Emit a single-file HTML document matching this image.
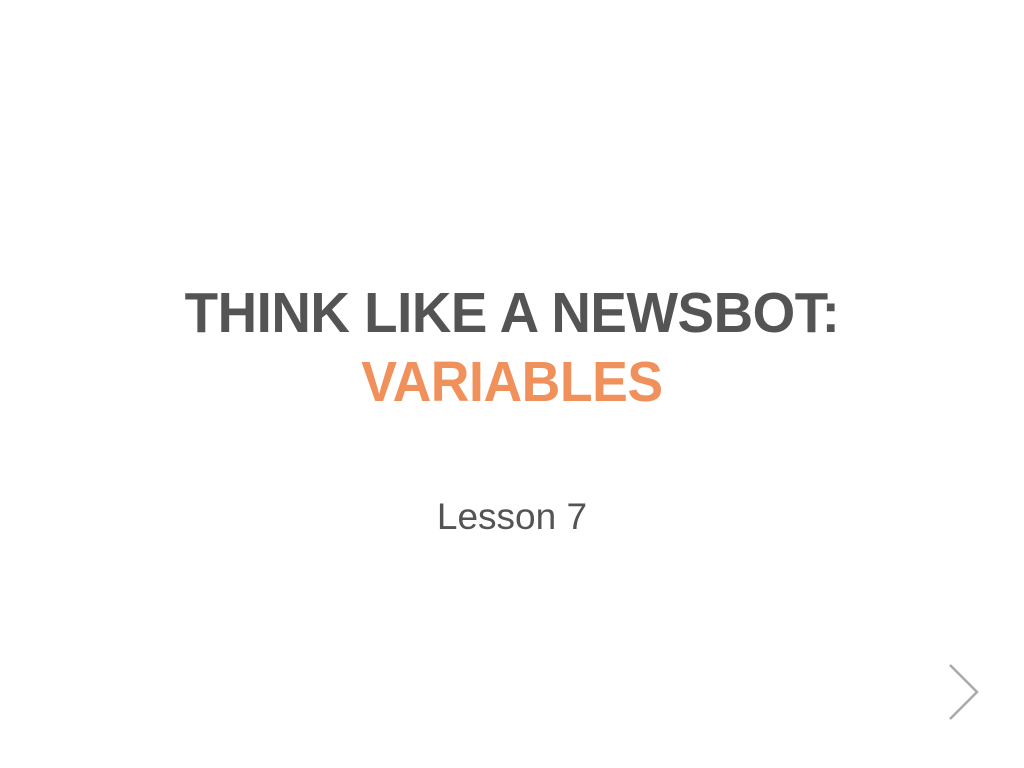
<!DOCTYPE html>
<html><head><style>
body{margin:0;width:1024px;height:768px;background:#fff;position:relative;overflow:hidden;font-family:"Liberation Sans",Arial,sans-serif}
.t{position:absolute;left:0;width:1024px;text-align:center;line-height:1;white-space:nowrap}
</style></head><body>
<div class="t" style="top:285px;font-size:57px;font-weight:bold;color:#545454;letter-spacing:-0.5px;transform:scaleX(0.96)">THINK LIKE A NEWSBOT:</div>
<div class="t" style="top:354px;font-size:57px;font-weight:bold;color:#f0905a;letter-spacing:-0.5px;transform:scaleX(0.94)">VARIABLES</div>
<div class="t" style="top:498px;font-size:37px;color:#545454">Lesson 7</div>
<svg style="position:absolute;left:0;top:0" width="1024" height="768"><polyline points="950,665 977,692 950,719" fill="none" stroke="#aaa" stroke-width="2.5"/></svg>
</body></html>
